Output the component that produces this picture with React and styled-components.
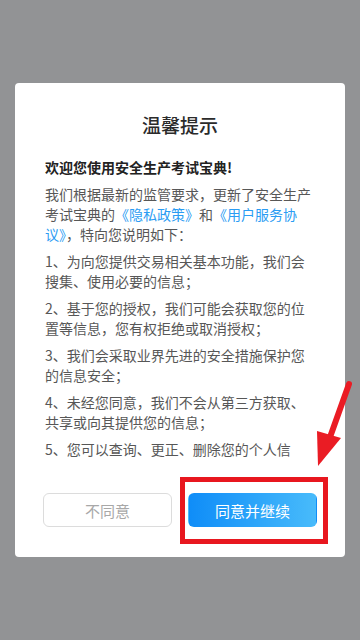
import styled, { createGlobalStyle } from 'styled-components';

const GlobalStyle = createGlobalStyle`
  html, body {
    margin: 0;
    padding: 0;
  }
  body {
    font-family: "Noto Sans CJK SC", "Noto Sans", sans-serif;
    background: #929395;
  }
`;

const items = [
  '1、为向您提供交易相关基本功能，我们会搜集、使用必要的信息；',
  '2、基于您的授权，我们可能会获取您的位置等信息，您有权拒绝或取消授权；',
  '3、我们会采取业界先进的安全措施保护您的信息安全；',
  '4、未经您同意，我们不会从第三方获取、共享或向其提供您的信息；',
  '5、您可以查询、更正、删除您的个人信息，我们也提供账户注销的渠道。'
];

const App = () => {
  return (
    <Page>
      <GlobalStyle />
      <Dialog>
        <Title>温馨提示</Title>
        <Scroll>
          <Welcome>欢迎您使用安全生产考试宝典!</Welcome>
          <Para>
            我们根据最新的监管要求，更新了安全生产考试宝典的
            <Link>《隐私政策》</Link>和<Link>《用户服务协议》</Link>，特向您说明如下：
          </Para>
          {items.map((text) => (
            <Para key={text}>{text}</Para>
          ))}
        </Scroll>
        <Actions>
          <Button>不同意</Button>
          <Marked>
            <Button $primary>同意并继续</Button>
            <Highlight />
          </Marked>
        </Actions>
      </Dialog>
      <Arrow viewBox="0 0 360 640" width="360" height="640">
        <line x1="349" y1="384" x2="329" y2="440" stroke="#ea1c24" strokeWidth="6" strokeLinecap="round" />
        <polygon points="317,431 341,438 318,466" fill="#ea1c24" />
      </Arrow>
    </Page>
  );
};

const Page = styled.div`
  position: relative;
  display: flex;
  justify-content: center;
  align-items: center;
  width: 360px;
  height: 640px;
  background: #929395;
  overflow: hidden;
`;

const Dialog = styled.div`
  display: flex;
  flex-direction: column;
  width: 330px;
  padding: 30px 0;
  box-sizing: border-box;
  background: #fff;
  border-radius: 4px;
`;

const Title = styled.div`
  font-size: 19px;
  line-height: 24px;
  font-weight: 500;
  color: #2b2b2b;
  text-align: center;
`;

const Scroll = styled.div`
  height: 306px;
  margin-top: 20px;
  padding: 0 30px;
  overflow: hidden;
`;

const Welcome = styled.div`
  font-size: 14px;
  line-height: 20px;
  font-weight: bold;
  color: #222;
`;

const Para = styled.p`
  margin: 7px 0 0;
  font-size: 14px;
  line-height: 20px;
  color: #575757;
`;

const Link = styled.span`
  color: #2a9cf3;
`;

const Actions = styled.div`
  display: grid;
  grid-template-columns: 1fr 1fr;
  gap: 16px;
  margin-top: 30px;
  padding: 0 28px;
`;

const Marked = styled.div`
  position: relative;
  display: flex;
`;

const Button = styled.button`
  flex: 1;
  min-width: 0;
  height: 34px;
  padding: 0;
  border-radius: 6px;
  font-family: inherit;
  font-size: 15px;
  cursor: pointer;
  border: 1px solid ${(p) => (p.$primary ? 'transparent' : '#dcdcdc')};
  background: ${(p) => (p.$primary ? 'linear-gradient(to right, #0f8df8, #48bbfb)' : '#fff')};
  color: ${(p) => (p.$primary ? '#fff' : '#a8a8a8')};
`;

const Highlight = styled.div`
  position: absolute;
  top: -16px;
  left: -8px;
  right: -11px;
  bottom: -17px;
  border: 5px solid #e8171f;
  pointer-events: none;
`;

const Arrow = styled.svg`
  position: absolute;
  top: 0;
  left: 0;
  pointer-events: none;
`;

export default App;
